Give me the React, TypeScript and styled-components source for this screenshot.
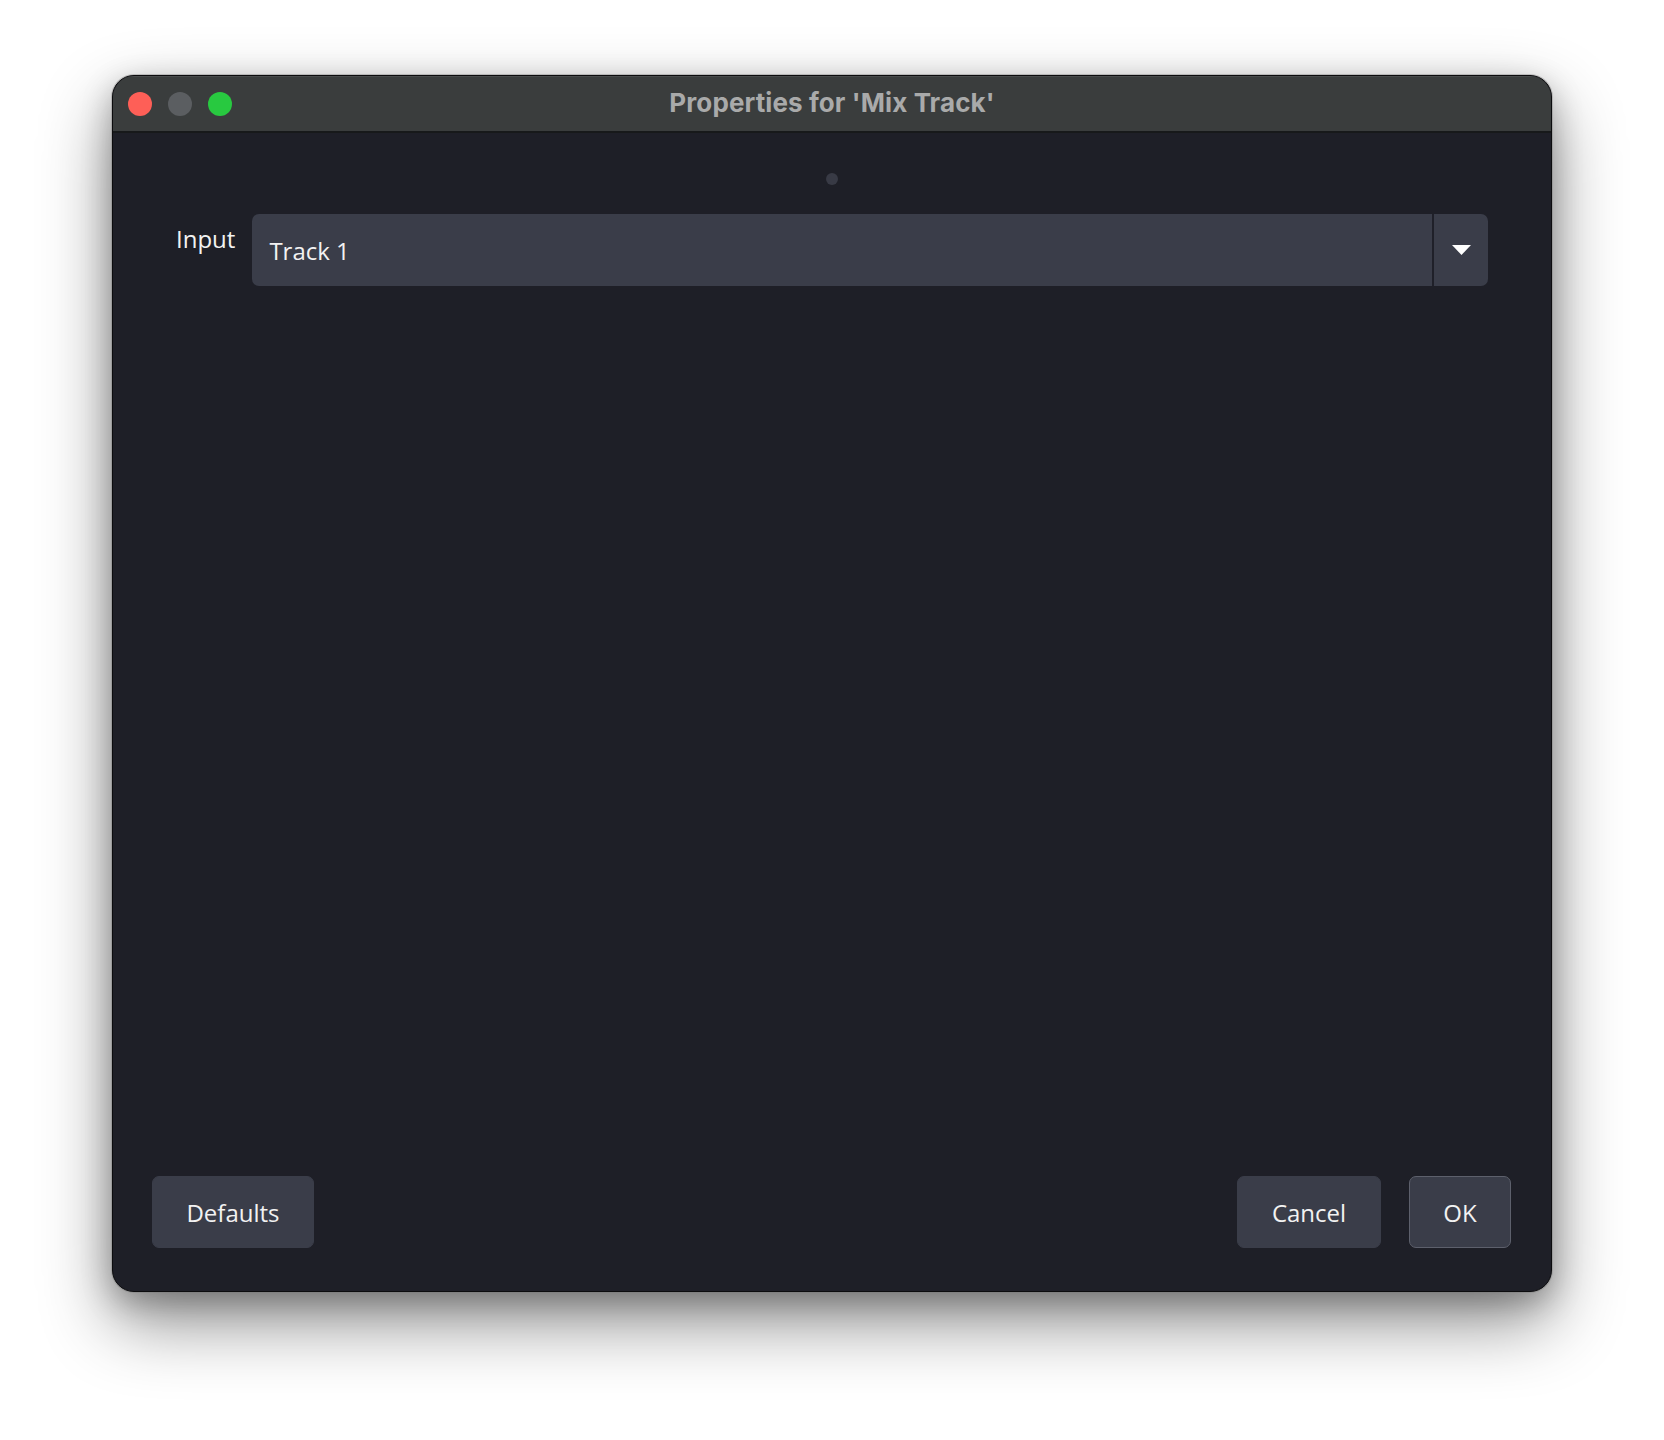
import React from "react";
import styled, { createGlobalStyle } from "styled-components";

const Global = createGlobalStyle`
  html, body { margin: 0; padding: 0; background: #ffffff; }
  body { font-family: "Open Sans", "Noto Sans", sans-serif; }
  * { box-sizing: border-box; }
`;

const Page = styled.div`
  width: 1664px;
  height: 1440px;
  padding: 75px 112px 0 112px;
  background: #ffffff;
`;

const Window = styled.div`
  width: 1440px;
  height: 1217px;
  display: flex;
  flex-direction: column;
  border-radius: 22px;
  overflow: hidden;
  background: #1e1f27;
  border: 1px solid #0c0c0e;
  box-shadow: 0 0 0 1px rgba(120, 120, 120, 0.35), 0 30px 70px rgba(0, 0, 0, 0.45),
    0 10px 30px rgba(0, 0, 0, 0.25);
`;

const TitleBar = styled.div`
  position: relative;
  height: 57px;
  flex: none;
  display: flex;
  align-items: center;
  justify-content: center;
  background: #3a3d3d;
  border-bottom: 2px solid #17191a;
  box-shadow: inset 0 1px 0 rgba(255, 255, 255, 0.08);
`;

const Lights = styled.div`
  position: absolute;
  left: 15px;
  top: 16px;
  display: flex;
  gap: 16px;
`;

const Light = styled.span<{ $color: string }>`
  width: 24px;
  height: 24px;
  border-radius: 50%;
  background: ${(p) => p.$color};
`;

const Title = styled.div`
  font-family: "Inter", "Open Sans", sans-serif;
  font-weight: 700;
  font-size: 26px;
  color: #a9aaaa;
  letter-spacing: 0.1px;
  margin-top: -2px;
`;

const Body = styled.div`
  flex: 1;
  display: flex;
  flex-direction: column;
  padding: 0 40px 43px 39px;
`;

const Handle = styled.div`
  align-self: center;
  width: 12px;
  height: 12px;
  border-radius: 50%;
  background: #383a45;
  margin: 40px 0 29px 0;
`;

const FormRow = styled.div`
  display: flex;
  align-items: flex-start;
  gap: 17px;
  padding: 0 23px 0 24px;
`;

const Label = styled.label`
  font-size: 24px;
  color: #f2f2f2;
  line-height: 32px;
  padding-top: 9px;
`;

const Combo = styled.div`
  flex: 1;
  height: 72px;
  display: flex;
  align-items: stretch;
  background: #3a3d49;
  border-radius: 7px;
`;

const ComboText = styled.div`
  flex: 1;
  display: flex;
  align-items: center;
  padding-left: 17px;
  font-size: 24px;
  color: #f2f2f2;
`;

const ComboArrow = styled.div`
  width: 56px;
  display: flex;
  align-items: center;
  justify-content: center;
  border-left: 2px solid #1f2029;
`;

const Spacer = styled.div`
  flex: 1;
`;

const ButtonRow = styled.div`
  display: flex;
  align-items: center;
  gap: 28px;
`;

const Button = styled.button<{ $width: number; $primary?: boolean }>`
  width: ${(p) => p.$width}px;
  height: 72px;
  border-radius: 7px;
  background: #3a3d49;
  border: 1.5px solid ${(p) => (p.$primary ? "#5d606c" : "#3a3d49")};
  color: #f2f2f2;
  font-family: "Open Sans", "Noto Sans", sans-serif;
  font-size: 24px;
  padding: 0;
  cursor: pointer;
`;

export default function App() {
  return (
    <>
      <Global />
      <Page>
        <Window>
          <TitleBar>
            <Lights>
              <Light $color="#fe5f57" />
              <Light $color="#5b5e61" />
              <Light $color="#28c940" />
            </Lights>
            <Title>Properties for 'Mix Track'</Title>
          </TitleBar>
          <Body>
            <Handle />
            <FormRow>
              <Label>Input</Label>
              <Combo>
                <ComboText>Track 1</ComboText>
                <ComboArrow>
                  <svg width="19" height="10" viewBox="0 0 19 10">
                    <path d="M0 0 H19 L9.5 10 Z" fill="#ffffff" />
                  </svg>
                </ComboArrow>
              </Combo>
            </FormRow>
            <Spacer />
            <ButtonRow>
              <Button $width={162}>Defaults</Button>
              <Spacer />
              <Button $width={144}>Cancel</Button>
              <Button $width={102} $primary>
                OK
              </Button>
            </ButtonRow>
          </Body>
        </Window>
      </Page>
    </>
  );
}
